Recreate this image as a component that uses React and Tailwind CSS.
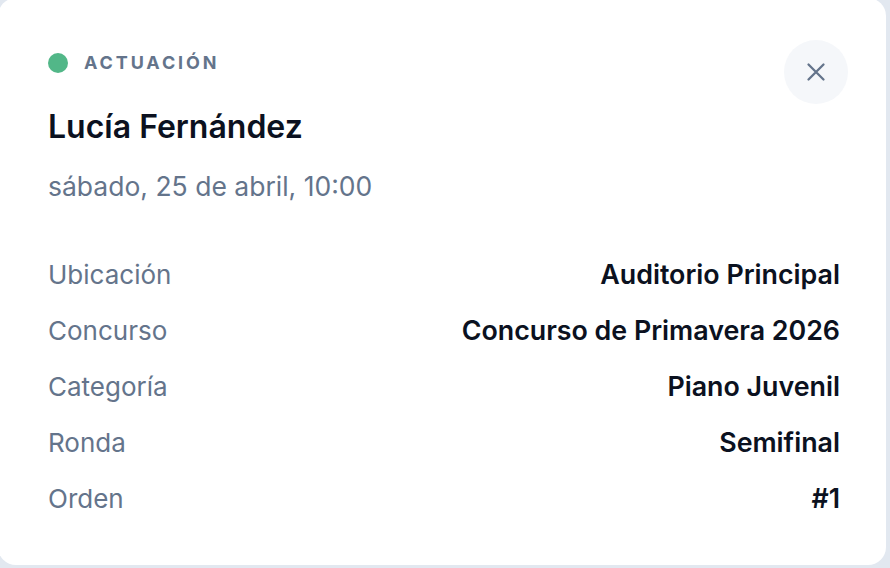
function DetailRow({ label, value }) {
  return (
    <div className="flex h-[56px] items-center justify-between">
      <span className="text-[26px] text-[#64748b]">{label}</span>
      <span className="text-[26.8px] font-semibold text-[#0b1120]">{value}</span>
    </div>
  );
}

export default function App() {
  const rows = [
    ["Ubicación", "Auditorio Principal"],
    ["Concurso", "Concurso de Primavera 2026"],
    ["Categoría", "Piano Juvenil"],
    ["Ronda", "Semifinal"],
    ["Orden", "#1"],
  ];

  return (
    <div
      className="h-[568px] w-[890px] overflow-hidden bg-[#e2e8f0]"
      style={{ fontFamily: "Inter, 'Noto Sans', sans-serif" }}
    >
      <div className="-ml-[2px] -mt-[2px] h-[567px] w-[888px] rounded-[18px] bg-white pl-[50px] pr-[46px] pt-[55px]">
        <div className="flex items-start justify-between">
          <div>
            <div className="flex h-[20px] items-center gap-4">
              <span className="h-[20px] w-[20px] rounded-full bg-[#52b788]" />
              <span className="text-[18px] font-bold uppercase leading-[20px] tracking-[0.16em] text-[#64748b]">
                Actuación
              </span>
            </div>
            <h2 className="mt-[34px] text-[32px] font-semibold leading-[40px] text-[#0b1120]">
              Lucía Fernández
            </h2>
            <p className="mt-[23px] text-[26.5px] leading-[32px] text-[#64748b]">
              sábado, 25 de abril, 10:00
            </p>
          </div>
          <button className="-mr-[8px] -mt-[13px] flex h-[64px] w-[64px] items-center justify-center rounded-full bg-[#f5f7fa]">
            <svg width="24" height="24" viewBox="0 0 24 24" fill="none" stroke="#64748b" strokeWidth="2.3" strokeLinecap="round">
              <path d="M4.5 4.5l15 15M19.5 4.5l-15 15" />
            </svg>
          </button>
        </div>
        <div className="mt-[44px]">
          {rows.map(([label, value]) => (
            <DetailRow key={label} label={label} value={value} />
          ))}
        </div>
      </div>
    </div>
  );
}
